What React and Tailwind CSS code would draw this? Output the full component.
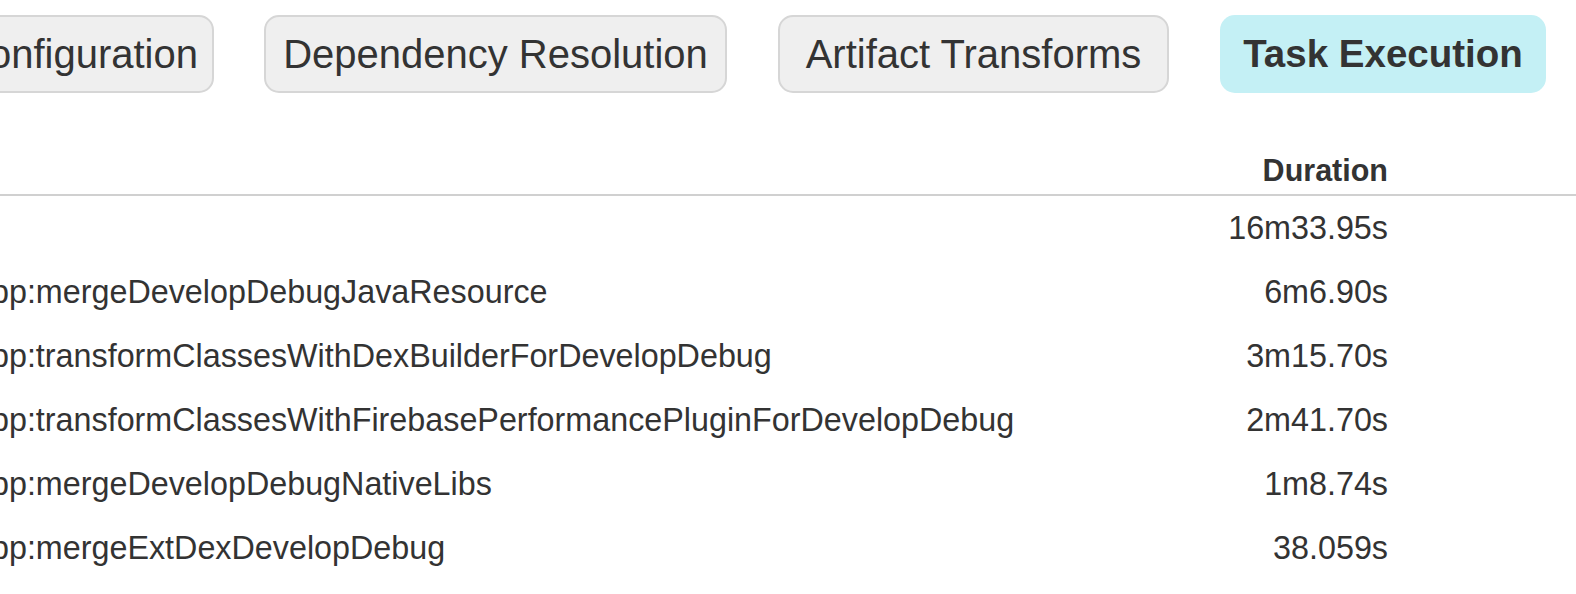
export default function App() {
  const tabs = [
    { label: "Configuration", w: "w-[270px] ml-[-56px]", active: false },
    { label: "Dependency Resolution", w: "w-[463px] ml-[50px]", active: false },
    { label: "Artifact Transforms", w: "w-[391px] ml-[51px]", active: false },
    { label: "Task Execution", w: "w-[326px] ml-[51px]", active: true },
  ];
  const rows = [
    ["", "16m33.95s"],
    ["app:mergeDevelopDebugJavaResource", "6m6.90s"],
    ["app:transformClassesWithDexBuilderForDevelopDebug", "3m15.70s"],
    ["app:transformClassesWithFirebasePerformancePluginForDevelopDebug", "2m41.70s"],
    ["app:mergeDevelopDebugNativeLibs", "1m8.74s"],
    ["app:mergeExtDexDevelopDebug", "38.059s"],
  ];
  return (
    <div
      className="w-[1576px] h-[594px] overflow-hidden bg-white text-[#333333]"
      style={{ fontFamily: '"Liberation Sans", Arial, sans-serif' }}
    >
      <div className="flex pt-[15px]">
        {tabs.map((t) => (
          <div
            key={t.label}
            className={
              t.active
                ? `${t.w} shrink-0 h-[78px] rounded-[15px] bg-[#c4f0f5] flex items-center justify-center text-[38.5px] font-bold`
                : `${t.w} shrink-0 h-[78px] rounded-[15px] bg-[#efefef] border-2 border-[#d6d6d6] flex items-center justify-center text-[40px]`
            }
          >
            {t.label}
          </div>
        ))}
      </div>
      <div className="mt-[53px]">
        <div className="flex h-[50px] items-center border-b-2 border-[#d0d0d0]">
          <div className="flex-1" />
          <div className="w-[300px] text-right text-[30.5px] font-bold pt-[1px]">Duration</div>
          <div className="w-[188px]" />
        </div>
        {rows.map(([name, dur], i) => (
          <div key={i} className="flex h-[64px] items-center text-[32.3px]">
            <div className="flex-1 ml-[-27px] whitespace-nowrap">{name}</div>
            <div className="w-[300px] text-right">{dur}</div>
            <div className="w-[188px]" />
          </div>
        ))}
      </div>
    </div>
  );
}
